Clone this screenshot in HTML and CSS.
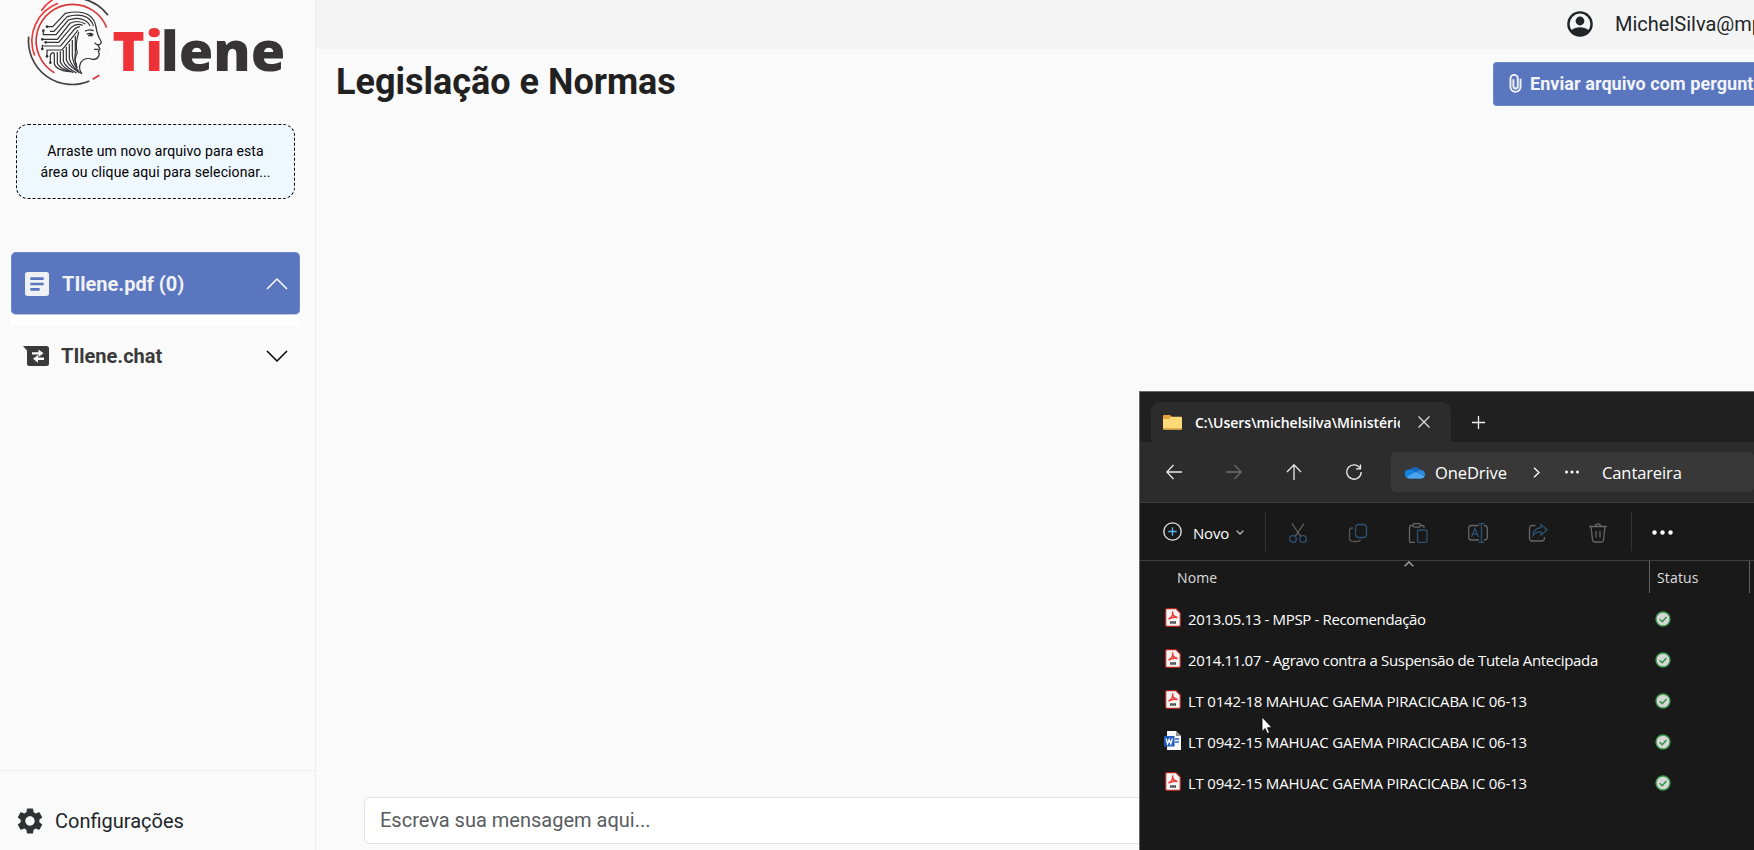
FILE: index.html
```html
<!DOCTYPE html>
<html lang="pt-BR">
<head>
<meta charset="utf-8">
<title>Tilene</title>
<link rel="stylesheet" href="styles.css">
</head>
<body>
<div class="app">
  <aside class="sidebar">
    <svg class="logo" viewBox="0 0 900 300" role="img" aria-label="Tilene">
      <g fill="none" stroke-width="5">
        <g stroke="#3f3f41">
          <path d="M86 110A131 131 0 0 0 268 243"/>
          <path d="M240 -5A133 133 0 0 1 324 46"/>
        </g>
        <g stroke="#d5383b">
          <path d="M163 218A110 110 0 0 1 217 13A110 110 0 0 1 320 83"/>
          <path d="M278 238L298 226"/>
        </g>
        <g stroke="#ee3a3c">
          <path d="M104 167A121 121 0 0 1 174 10"/>
          <path d="M124 32Q138 12 158 -1"/>
        </g>
        <path d="M336 105A120 120 0 0 1 288 222" stroke="#fff" stroke-width="4"/>
        <g stroke="#333335" stroke-width="3.600">
          <path d="M141 80H158L196 40Q240 30 266 45Q285 58 288 82"/>
          <path d="M150 94H162L201 50Q238 40 260 52Q276 62 280 78"/>
          <path d="M130 92V104H168L205 60Q234 50 252 60Q266 67 270 78"/>
          <path d="M127 118H172L210 70Q234 58 256 72"/>
          <path d="M137 127H176L214 82Q230 68 248 76"/>
          <path d="M127 134V146M127 138H182L218 94Q226 82 240 80"/>
          <path d="M141 168V150H186L222 106L234 90"/>
          <path d="M151 188V166Q153 158 163 158"/>
          <path d="M163 160V192Q168 210 206 215"/>
          <path d="M172 156V190Q178 206 212 216"/>
          <path d="M181 154V186Q188 204 220 218"/>
          <path d="M190 150V184Q198 204 230 219"/>
          <path d="M199 140V180Q208 202 244 220"/>
          <path d="M208 132V176Q214 198 238 218"/>
          <path d="M217 120V168Q220 194 236 214"/>
          <path d="M226 108V156Q222 184 232 204"/>
          <path d="M236 96Q224 138 232 158Q220 180 230 196"/>
          <path d="M288 80Q290 102 304 126Q304 132 294 136L300 147L295 154L298 162Q294 180 278 178Q254 170 242 188Q234 206 246 222"/>
          <path d="M255 94Q266 86 281 92M260 103Q270 97 280 104M264 107H278M282 148H296M284 128Q290 136 296 134"/>
        </g>
        <g fill="#333335">
          <circle cx="141" cy="80" r="4"/><circle cx="130" cy="92" r="4"/><circle cx="127" cy="118" r="4"/><circle cx="137" cy="127" r="4"/><circle cx="127" cy="147" r="4"/><circle cx="141" cy="169" r="4"/><circle cx="151" cy="188" r="4"/><circle cx="272" cy="103" r="4"/>
        </g>
      </g>
      <text class="wordmark red" y="213" x="337 436">Ti</text>
      <text class="wordmark" y="213" x="482" textLength="374" lengthAdjust="spacingAndGlyphs">lene</text>
    </svg>
    <div class="dropzone">Arraste um novo arquivo para esta<br>área ou clique aqui para selecionar...</div>
    <nav class="menu">
      <div class="menu-item active">
        <svg class="menu-icon" viewBox="3 3 18 18"><path fill="#f0f1f4" d="M19 3H5a2 2 0 0 0-2 2v14a2 2 0 0 0 2 2h14a2 2 0 0 0 2-2V5a2 2 0 0 0-2-2zm-5 14H7v-2h7v2zm3-4H7v-2h10v2zm0-4H7V7h10v2z"/></svg>
        <span>TIlene.pdf (0)</span>
        <svg class="chevron" viewBox="0 0 22 14"><path d="M1 12L11 2L21 12"/></svg>
      </div>
      <div class="menu-item">
        <svg class="menu-icon chat" viewBox="0 0 26 20"><path fill="#3a3a3a" d="M0 0H23.5Q26 0 26 2.500V17.500Q26 20 23.500 20H6.500Q4 20 4 17.500V4.500Z"/><path fill="#fafafa" d="M9 6.200H15.500V3.500L20.500 7.300L15.500 11V8.500H9ZM21 11.500V14H15V16.700L10 12.800L15 9V11.500Z"/></svg>
        <span>TIlene.chat</span>
        <svg class="chevron" viewBox="0 0 22 14"><path d="M1 2L11 12L21 2"/></svg>
      </div>
    </nav>
    <div class="settings">
      <svg class="gear" viewBox="2 2 20 20"><path fill="#2f3133" d="M19.140 12.940c.04-.3.060-.610.060-.940 0-.320-.020-.640-.070-.940l2.030-1.580c.180-.140.230-.410.120-.610l-1.920-3.320c-.120-.220-.370-.290-.590-.220l-2.390.960c-.500-.380-1.030-.700-1.620-.940L14.400 2.810c-.040-.240-.240-.410-.480-.410h-3.840c-.240 0-.430.170-.470.410L9.250 5.350c-.590.240-1.130.570-1.620.940l-2.390-.960c-.220-.080-.470 0-.590.220L2.740 8.870c-.120.210-.080.470.120.610l2.030 1.580c-.050.300-.090.630-.090.940s.020.640.070.940l-2.030 1.580c-.180.140-.230.410-.120.610l1.920 3.320c.120.220.370.290.590.220l2.390-.960c.500.380 1.030.700 1.620.940l.360 2.540c.050.240.240.410.480.410h3.840c.240 0 .440-.170.470-.410l.360-2.540c.590-.240 1.130-.560 1.620-.940l2.390.960c.220.080.470 0 .590-.220l1.920-3.320c.120-.220.070-.470-.120-.610l-2.010-1.580zM12 15.600c-1.980 0-3.600-1.620-3.600-3.600s1.620-3.600 3.600-3.600 3.600 1.620 3.600 3.600-1.620 3.600-3.600 3.600z"/></svg>
      <span>Configurações</span>
    </div>
  </aside>
  <main class="main">
    <header class="topbar">
      <svg class="account" viewBox="0 0 26 26"><circle cx="13" cy="13" r="11.600" fill="none" stroke="#212529" stroke-width="2.400"/><circle cx="13" cy="10" r="4.400" fill="#212529"/><path fill="#212529" d="M4 19.500Q8 16.200 13 16.200T22 19.500Q18.500 25 13 25T4 19.500Z"/></svg>
      <span class="email">MichelSilva@mp</span>
    </header>
    <div class="heading">
      <h1>Legislação e Normas</h1>
      <button class="send">
        <svg class="clip" viewBox="0 0 13 20"><path d="M11.800 5V13.500A5.300 5.300 0 0 1 1.200 13.500V4.800A3.800 3.800 0 0 1 8.900 4.800V13A2.300 2.300 0 0 1 4.300 13V5.500"/></svg>
        <span>Enviar arquivo com pergunt</span>
      </button>
    </div>
    <div class="composer">Escreva sua mensagem aqui...</div>
  </main>
</div>

<section class="explorer">
  <div class="tabs">
    <div class="tab">
      <svg class="folder" viewBox="0 0 19 15"><path fill="#e8a33d" d="M0 1Q0 0 1 0H7L9 2H17V6H0Z"/><path fill="#ffd977" d="M0 4H6L8.500 1.700H18Q19 1.700 19 2.700V13.500Q19 14.500 18 14.500H1Q0 14.500 0 13.500Z"/><path fill="#e6ae48" d="M0 13H19V13.500Q19 14.500 18 14.500H1Q0 14.500 0 13.500Z"/></svg>
      <span class="tab-title">C:\Users\michelsilva\Ministério</span>
      <svg class="close" viewBox="0 0 12 12"><path d="M.5 .5L11.500 11.500M11.500 .5L.5 11.500"/></svg>
    </div>
    <svg class="plus" viewBox="0 0 13 13"><path d="M6.500 0V13M0 6.500H13"/></svg>
  </div>
  <div class="navrow">
    <svg class="nav-icon" viewBox="0 0 16 16"><path d="M16 8H1M7.500 1L.8 8L7.500 15"/></svg>
    <svg class="nav-icon dim" viewBox="0 0 16 16"><path d="M0 8H15M8.500 1L15.200 8L8.500 15"/></svg>
    <svg class="nav-icon" viewBox="0 0 16 16"><path d="M8 16V1M1 8L8 .8L15 8"/></svg>
    <svg class="nav-icon" viewBox="0 0 16 16"><path d="M14.300 4.500A7.200 7.200 0 1 0 15.200 8M14.500 .5V4.800H10"/></svg>
    <div class="address">
      <svg class="cloud" viewBox="0 0 20 14"><path fill="#1b62b8" d="M5 5A6 6 0 0 1 15.500 5L13 11H5Z"/><path fill="#0f83dd" d="M4.500 4.500Q8 4 10 7L3 13A4.300 4.300 0 0 1 4.500 4.500Z"/><path fill="#2b8ae0" d="M15.500 5A4.300 4.300 0 0 1 16 13.600H4.500Q2.500 13.600 1.500 12L12 6.500Q13.500 5 15.500 5Z"/><path fill="#4ba4ee" d="M1.500 12L10 7L19.500 11.500Q18.500 13.600 16 13.600H4.500Q2.500 13.600 1.500 12Z"/></svg>
      <span class="crumb one">OneDrive</span>
      <svg class="sep" viewBox="0 0 7 11"><path d="M1 .8L6 5.500L1 10.200"/></svg>
      <svg class="dots" viewBox="0 0 14 4"><circle cx="1.500" cy="2" r="1.500"/><circle cx="7" cy="2" r="1.500"/><circle cx="12.500" cy="2" r="1.500"/></svg>
      <span class="crumb two">Cantareira</span>
    </div>
  </div>
  <div class="toolbar">
    <svg class="new-icon" viewBox="0 0 19 19"><circle cx="9.500" cy="9.500" r="8.700" stroke="#e8e8e8"/><path d="M9.500 5.300V13.700M5.300 9.500H13.700" stroke="#5cb8f2"/></svg>
    <span class="new-label">Novo</span>
    <svg class="caret" viewBox="0 0 8 5"><path d="M.6 .6L4 4L7.400 .6"/></svg>
    <i class="divider"></i>
    <div class="tools">
      <svg viewBox="0 0 20 20"><g stroke="#666"><path d="M4 .5L12.800 13.500M16 .5L7.200 13.500"/></g><g stroke="#2d5273"><circle cx="5" cy="16" r="3.300"/><circle cx="15" cy="16" r="3.300"/></g></svg>
      <svg viewBox="0 0 20 20"><path d="M5 5H4Q1.500 5 1.500 8V14.500Q1.500 18.500 5.500 18.500H9Q12 18.500 12.500 16.500" stroke="#555"/><rect x="7.500" y="1.500" width="11" height="13" rx="3" stroke="#2d5273"/></svg>
      <svg viewBox="0 0 20 20"><path d="M5 2.500H3.500Q1.500 2.500 1.500 4.500V17.500Q1.500 19.500 3.500 19.500H7M13 2.500H14Q16 2.500 16 4.500V5" stroke="#666"/><rect x="5" y=".7" width="7.500" height="3.400" rx="1.700" stroke="#666"/><rect x="9.500" y="7" width="9.500" height="12.500" rx="2" stroke="#2d5273"/></svg>
      <svg viewBox="0 0 20 20"><path d="M11 2.500H3.500Q.7 2.500 .7 5.500V14Q.7 17 3.500 17H11M16 2.500Q19.300 2.500 19.300 5.500V14Q19.300 17 16 17" stroke="#666"/><path d="M13.500 .7V19.300M10.700 .7H16.300M10.700 19.300H16.300M3.500 14L7 5.500L10.500 14M4.700 11.200H9.300" stroke="#2d5273"/></svg>
      <svg viewBox="0 0 20 20"><path d="M7.500 2.500H4.500Q1.500 2.500 1.500 5.500V15Q1.500 18 4.500 18H13.500Q16.500 18 16.500 15V14" stroke="#666"/><path d="M13 1.500L19 6.800L13 12V9Q8 8.500 5 12.500Q5.500 5.500 13 4.500Z" stroke="#2d5273"/></svg>
      <svg viewBox="0 0 20 20"><path d="M1 3.500H19M3 3.500L4.500 17Q4.800 19 6.500 19H13.500Q15.200 19 15.500 17L17 3.500M7.500 3Q7.500 .8 10 .8T12.500 3M8 8V14.500M12 8V14.500" stroke="#666"/></svg>
    </div>
    <i class="divider"></i>
    <svg class="more" viewBox="0 0 21 5"><circle cx="2.500" cy="2.500" r="2.200"/><circle cx="10.500" cy="2.500" r="2.200"/><circle cx="18.500" cy="2.500" r="2.200"/></svg>
  </div>
  <div class="columns">
    <span class="col-name">Nome</span>
    <svg class="sort" viewBox="0 0 10 6"><path d="M.7 5.300L5 1L9.300 5.300"/></svg>
    <span class="col-status">Status</span>
  </div>
  <svg class="defs" width="0" height="0">
    <symbol id="pdf" viewBox="0 0 16 19"><path d="M2 .7H11L15.300 5V17Q15.300 18.300 14 18.300H2Q.7 18.300 .7 17V2Q.7 .7 2 .7Z" fill="#f5f3f3" stroke="#b3261e" stroke-width="1.200"/><path d="M3.500 11Q8.500 8.500 7.600 3.500Q7 8.500 12.500 9.500Q8 8.300 3.500 11Z" fill="none" stroke="#f03a38" stroke-width="1.500"/><path d="M5 14.500H11" stroke="#444" stroke-width="2.400" stroke-dasharray="1.800 .3"/></symbol>
    <symbol id="doc" viewBox="0 0 17 19"><path d="M3 0H12L17 5V19H3Z" fill="#f7f7f7"/><path d="M12 0V5H17Z" fill="#8d9299"/><path d="M11 8H15M11 11H15" stroke="#2f6fc8" stroke-width="1.400"/><rect y="5" width="10.500" height="10.500" fill="#1f5bb8"/><path d="M2 7.500L3.600 13L5.200 8.500L6.800 13L8.400 7.500" fill="none" stroke="#fff" stroke-width="1.300"/></symbol>
    <symbol id="ok" viewBox="0 0 16 16"><circle cx="8" cy="8" r="7" fill="#d5d8d5" stroke="#3a9a4c" stroke-width="1.300"/><path d="M4.700 8.300L7.200 10.700L11.500 6" fill="none" stroke="#2f8d43" stroke-width="1.500"/></symbol>
  </svg>
  <ul class="files">
    <li><svg class="ficon"><use href="#pdf"/></svg><span class="f1">2013.05.13 - MPSP - Recomendação</span><svg class="ok"><use href="#ok"/></svg></li>
    <li><svg class="ficon"><use href="#pdf"/></svg><span class="f2">2014.11.07 - Agravo contra a Suspensão de Tutela Antecipada</span><svg class="ok"><use href="#ok"/></svg></li>
    <li><svg class="ficon"><use href="#pdf"/></svg><span class="f3">LT 0142-18 MAHUAC GAEMA PIRACICABA IC 06-13</span><svg class="ok"><use href="#ok"/></svg></li>
    <li><svg class="ficon doc"><use href="#doc"/></svg><span class="f3">LT 0942-15 MAHUAC GAEMA PIRACICABA IC 06-13</span><svg class="ok"><use href="#ok"/></svg></li>
    <li><svg class="ficon"><use href="#pdf"/></svg><span class="f3">LT 0942-15 MAHUAC GAEMA PIRACICABA IC 06-13</span><svg class="ok"><use href="#ok"/></svg></li>
  </ul>
</section>
<svg class="cursor" viewBox="0 0 12 19"><path d="M1 1V15.500L4.200 12.500L6.300 17.500L8.500 16.500L6.400 11.700H11Z" fill="#fff" stroke="#000" stroke-width=".8"/></svg>
</body>
</html>
```

FILE: styles.css
```css
* { box-sizing: border-box; }
body { margin: 0; width: 1754px; height: 850px; overflow: hidden; position: relative; background: #fafafa; font-family: Roboto, sans-serif; color: #212529; }
svg { display: block; flex: none; }
span { white-space: nowrap; }

.app { display: flex; height: 850px; }
.sidebar { width: 316px; flex: none; display: flex; flex-direction: column; border-right: 1px solid #eee; }
.logo { width: 300px; height: 100px; }
.wordmark { font: 800 165px "Open Sans", sans-serif; fill: #373435; }
.wordmark.red { fill: #ee3338; }
.dropzone { margin: 24px 0 0 16px; width: 279px; height: 75px; padding-top: 16px; border: 1px dashed #000; border-radius: 12px; background: #f0f8ff; color: #000; font-size: 14px; line-height: 21px; letter-spacing: .1px; text-align: center; }
.menu { margin: 53px 0 0 11px; width: 289px; background: #fff; }
.menu-item { display: flex; align-items: center; height: 62px; padding: 0 12px 0 13px; font-size: 20px; font-weight: 700; color: #3a3a3a; background: #fafafa; border-radius: 5px; }
.menu-item span { flex: 1; }
.menu-item.active { height: 63px; color: #f0f1f4; background: #5a76bf; border: 1px solid #6d87ca; border-bottom-color: #bcc6df; margin-bottom: 10px; padding: 1px 11px 0 13px; }
.menu-icon { width: 24px; height: 24px; margin-right: 13px; }
.menu-icon.chat { width: 26px; height: 20px; margin: 0 12px 0 -1px; }
.chevron { width: 22px; height: 14px; fill: none; stroke: #000; stroke-width: 1.5; }
.active .chevron { stroke: #fff; }
.settings { margin-top: auto; height: 80px; border-top: 1px solid #eee; display: flex; align-items: center; gap: 12px; padding: 20px 0 0 17px; font-size: 20px; }
.gear { width: 26px; height: 26px; }

.main { flex: 1; min-width: 0; display: flex; flex-direction: column; overflow: hidden; }
.topbar { height: 49px; flex: none; background: #f4f4f4; display: flex; align-items: center; gap: 22px; padding: 0 0 1px 1251px; font-size: 20px; }
.account { width: 26px; height: 26px; }
.heading { display: flex; justify-content: space-between; height: 70px; padding: 13px 0 0 20px; }
h1 { margin: 0; font-size: 36px; line-height: 40px; font-weight: 700; color: #212121; }
.send { width: 261px; height: 44px; padding: 0 0 2px 15px; border: 1px solid #6d87ca; border-right: 0; border-radius: 4px 0 0 4px; background: #5a76bf; color: #f2f4f8; font: 700 18px Roboto, sans-serif; letter-spacing: .06px; display: flex; align-items: center; gap: 8px; }
.clip { width: 13px; height: 19px; fill: none; stroke: #f2f4f8; stroke-width: 2; }
.composer { margin: auto 0 6px 48px; height: 47px; padding-left: 15px; border: 1px solid #dee2e6; border-radius: 6px; background: #fff; font-size: 20px; line-height: 45px; color: #595c5f; }

.explorer { position: absolute; left: 1139px; top: 391px; width: 615px; height: 459px; background: #191919; border: solid #686868; border-width: 1px 0 0 1px; font-family: "Open Sans", "Noto Sans", sans-serif; color: #fff; overflow: hidden; }
.explorer svg { fill: none; stroke-width: 1.300; }
.tabs { display: flex; height: 50px; background: #202020; padding: 10px 0 0 11px; }
.tab { width: 300px; height: 40px; background: #2c2c2c; border-radius: 9px 9px 0 0; display: flex; align-items: center; padding-left: 12px; }
.folder { width: 19px; height: 15px; }
.tab-title { width: 205px; margin-left: 13px; overflow: hidden; font-size: 14px; font-weight: 600; letter-spacing: -.02px; }
.close { width: 12px; height: 12px; margin-left: 18px; stroke: #ddd; }
.plus { width: 13px; height: 13px; margin: 14px 0 0 21px; stroke: #eee; }
.navrow { display: flex; align-items: center; height: 61px; background: #2c2c2c; border-bottom: 1px solid #3f3f3f; padding-left: 26px; }
.nav-icon { width: 16px; height: 16px; margin-right: 44px; stroke: #e8e8e8; }
.dim { stroke: #6d6d6d; }
.address { width: 363px; height: 40px; margin-left: -15px; flex: none; display: flex; align-items: center; padding-left: 14px; background: #383838; border-radius: 5px; font-size: 16.5px; }
.cloud { width: 20px; height: 14px; }
.crumb { line-height: 22px; padding-top: 1px; }
.crumb.one { margin-left: 10px; width: 73px; letter-spacing: -.1px; }
.crumb.two { margin-left: 23px; letter-spacing: -.1px; }
.sep { width: 7px; height: 11px; margin-left: 25px; stroke: #fff; }
.explorer .dots { width: 14px; height: 4px; margin-left: 25px; fill: #fff; }
.toolbar { display: flex; align-items: center; height: 58px; border-bottom: 1px solid #3f3f3f; padding: 2px 0 0 23px; }
.new-icon { width: 19px; height: 19px; margin-top: -2px; }
.new-label { margin-left: 11px; width: 36px; font-size: 15px; letter-spacing: -.2px; }
.caret { width: 8px; height: 5px; margin-left: 7px; stroke: #bbb; }
.divider { width: 1px; height: 39px; margin-top: -2px; background: #333; flex: none; }
.caret + .divider { margin-left: 21px; }
.tools { display: flex; gap: 40px; margin: 0 23px 0 22px; }
.tools svg { width: 20px; height: 20px; }
.explorer .more { width: 21px; height: 5px; margin-left: 20px; fill: #fff; }
.columns { display: flex; height: 32px; font-size: 14px; line-height: 33px; color: #dedede; padding-left: 37px; letter-spacing: .15px; }
.col-name { width: 227px; }
.sort { width: 10px; height: 6px; stroke: #aaa; }
.col-status { width: 101px; margin-left: 235px; padding-left: 7px; border: solid #636363; border-width: 0 1px; }
.files { list-style: none; margin: 5px 0 0; padding: 0 0 0 25px; font-size: 15px; }
.files li { display: flex; align-items: center; height: 41px; }
.files span { width: 467px; margin-left: 7px; }
.ficon { width: 16px; height: 19px; margin-top: -2px; }
.files .doc { width: 17px; margin-left: -1px; }
.ok { width: 16px; height: 16px; }
.files .f1 { letter-spacing: -.35px; }
.files .f2 { letter-spacing: -.34px; }
.files .f3 { letter-spacing: -.21px; }
.defs { position: absolute; }
.cursor { position: absolute; left: 1261px; top: 716px; width: 12px; height: 19px; }
```
